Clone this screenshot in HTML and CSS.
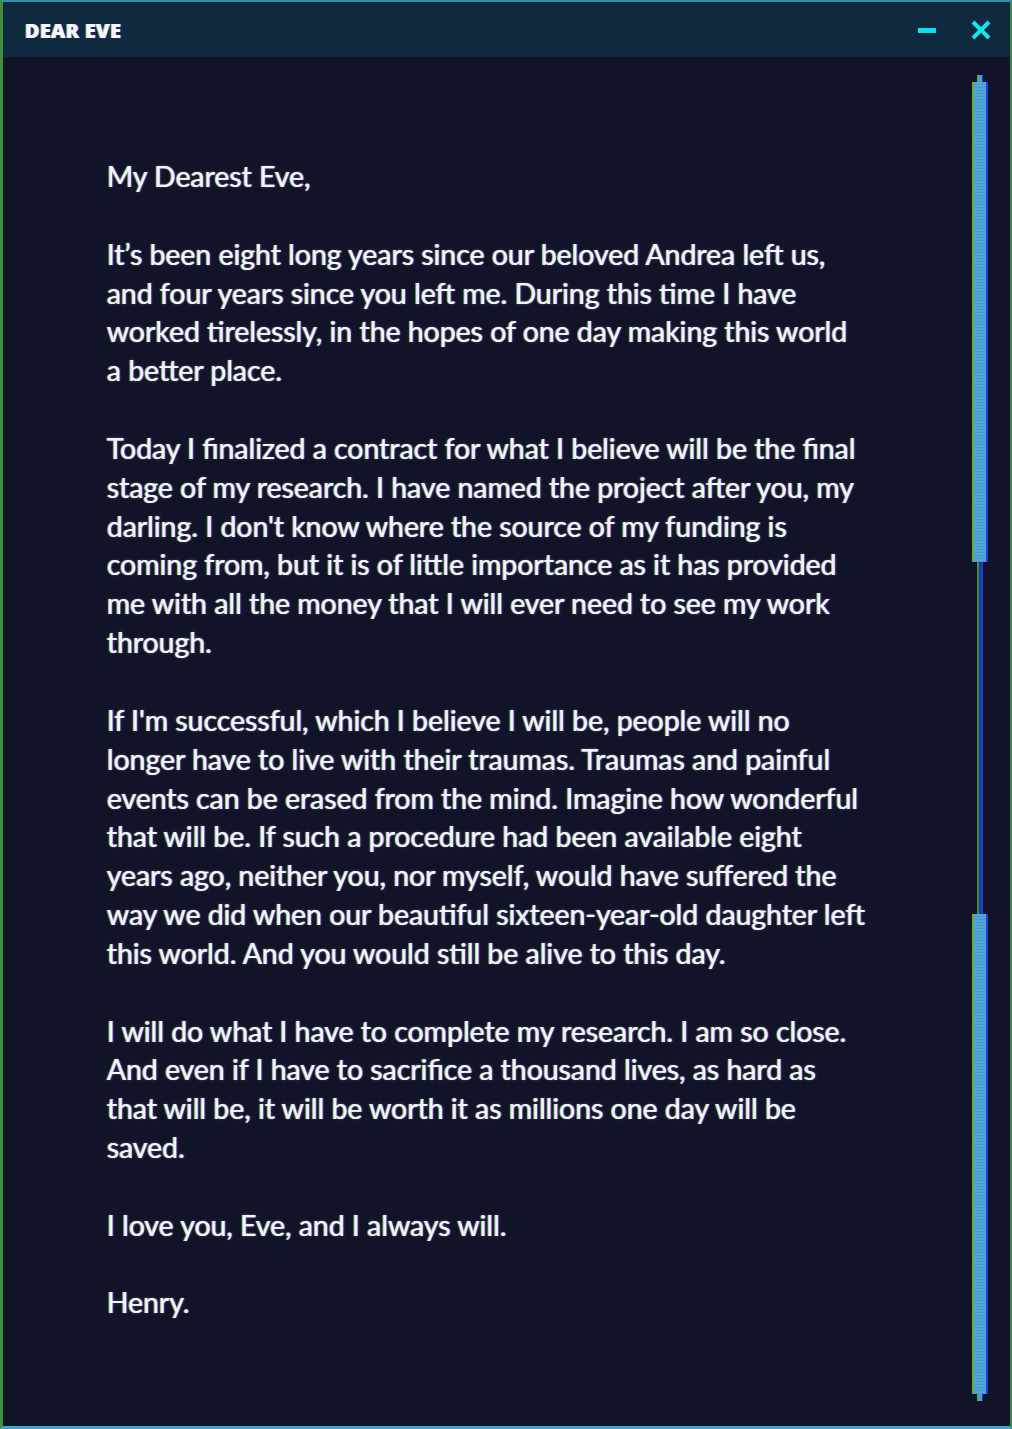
FILE: index.html
```html
<!DOCTYPE html>
<html>
<head>
<meta charset="utf-8">
<link rel="stylesheet" href="styles.css">
</head>
<body>
<div class="window">
  <div class="titlebar">
    <div class="title">DEAR EVE</div>
    <div class="controls">
      <span class="minimize"></span>
      <svg class="close" width="22" height="22" viewBox="0 0 22 22"><path d="M3 3 L19 19 M19 3 L3 19" stroke="#19e3ef" stroke-width="4" stroke-linecap="butt"/></svg>
    </div>
  </div>
  <div class="content">
    <div class="letter">
      <p>My Dearest Eve,</p>
      <p>It’s been eight long years since our beloved Andrea left us,<br>and four years since you left me. During this time I have<br>worked tirelessly, in the hopes of one day making this world<br>a better place.</p>
      <p>Today I finalized a contract for what I believe will be the final<br>stage of my research. I have named the project after you, my<br>darling. I don't know where the source of my funding is<br>coming from, but it is of little importance as it has provided<br>me with all the money that I will ever need to see my work<br>through.</p>
      <p>If I'm successful, which I believe I will be, people will no<br>longer have to live with their traumas. Traumas and painful<br>events can be erased from the mind. Imagine how wonderful<br>that will be. If such a procedure had been available eight<br>years ago, neither you, nor myself, would have suffered the<br>way we did when our beautiful sixteen-year-old daughter left<br>this world. And you would still be alive to this day.</p>
      <p>I will do what I have to complete my research. I am so close.<br>And even if I have to sacrifice a thousand lives, as hard as<br>that will be, it will be worth it as millions one day will be<br>saved.</p>
      <p>I love you, Eve, and I always will.</p>
      <p>Henry.</p>
    </div>
    <div class="scrollbar">
      <div class="stub"></div>
      <div class="thumb"></div>
      <div class="track"></div>
      <div class="thumb"></div>
      <div class="stub"></div>
    </div>
  </div>
</div>
</body>
</html>
```
FILE: styles.css
```css
html, body {
  margin: 0;
  padding: 0;
  background: #111428;
}
.window {
  width: 1012px;
  height: 1429px;
  box-sizing: border-box;
  border-top: 2px solid #2a8fb0;
  border-bottom: 3px solid #3aa6c8;
  border-left: 3px solid #3f8f3a;
  border-right: 2px solid #3d8c4a;
  display: flex;
  flex-direction: column;
  background: #111428;
}
.titlebar {
  height: 55px;
  flex: none;
  background: #0f2a3e;
  display: flex;
  align-items: center;
  justify-content: space-between;
  padding: 0 18px 0 22px;
}
.title {
  font-family: "Open Sans", "DejaVu Sans", sans-serif;
  font-weight: 800;
  font-size: 20px;
  letter-spacing: 0.2px;
  color: #f4f6ff;
  text-shadow: -1px 0 rgba(230, 230, 40, 0.8), 1px 0 rgba(40, 60, 255, 0.9);
  margin-top: 2px;
}
.controls {
  display: flex;
  align-items: center;
  gap: 34px;
  margin-top: 1px;
}
.minimize {
  width: 18px;
  height: 5px;
  background: #08e2f5;
}
.close {
  display: block;
}
.content {
  flex: 1;
  display: flex;
  min-height: 0;
}
.letter {
  flex: 1;
  padding: 100px 0 0 104px;
  font-family: "Lato", "Noto Sans", sans-serif;
  font-size: 28.4px;
  line-height: 38.85px;
  color: #f2f4ff;
  white-space: nowrap;
  text-shadow: -1px 0 rgba(235, 235, 40, 0.75), 1px 0 rgba(40, 60, 255, 0.85), 0 0 3px rgba(255, 255, 255, 0.25);
}
.letter p {
  margin: 0 0 38.85px 0;
}
.scrollbar {
  width: 14px;
  flex: none;
  margin: 18px 23px 25px 0;
  display: flex;
  flex-direction: column;
  align-items: center;
}
.stub {
  width: 4px;
  height: 7px;
  background: #4a9fc8;
  border-left: 1px solid #5aa83a;
  border-right: 1px solid #2236e0;
}
.thumb {
  width: 12px;
  height: 480px;
  background: repeating-linear-gradient(to bottom, #4fa8d6 0 2px, #4798c6 2px 3px);
  border-left: 2px solid #6aae3a;
  border-right: 2px solid #1f3fe0;
}
.track {
  flex: 1;
  width: 2px;
  background: #1a3a9a;
  border-left: 2px solid #3f8f3a;
  border-right: 2px solid #1f3fe0;
}
```
